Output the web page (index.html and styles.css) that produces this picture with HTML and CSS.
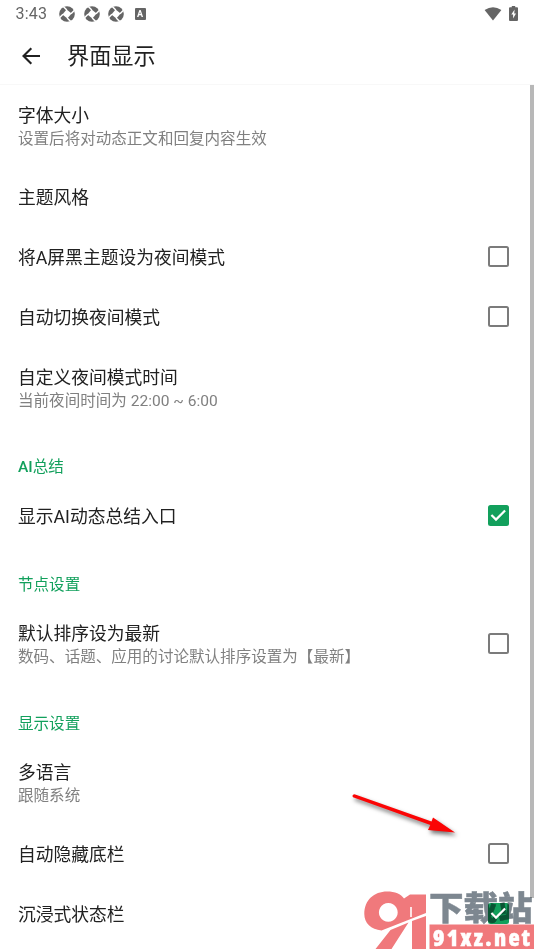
FILE: index.html
```html
<!DOCTYPE html>
<html lang="zh-CN">
<head>
<meta charset="utf-8">
<title>界面显示</title>
<link rel="stylesheet" href="styles.css">
</head>
<body>
<svg class="defs" width="0" height="0">
  <symbol id="sync" viewBox="0 0 16 16">
    <circle cx="8" cy="8" r="7.8" fill="#656565"/>
    <path d="M7.600 3.400 12.600 7.600 8.400 12.600 3.400 8.400Z" fill="#fff"/>
    <path d="M7.800 4 4.300.5M12 7.800l3.500-3.500M8.200 12l3.500 3.500M4 8.200.5 11.700" stroke="#fff" stroke-width="1.500"/>
  </symbol>
  <symbol id="tick" viewBox="0 0 21 21">
    <path d="M3.500 10.300 8.200 15 17.500 5.700" fill="none" stroke="#fff" stroke-width="2.300"/>
  </symbol>
</svg>
<div class="screen">
  <header class="top">
    <div class="status">
      <span class="clock">3:43</span>
      <svg class="sync"><use href="#sync"/></svg>
      <svg class="sync"><use href="#sync"/></svg>
      <svg class="sync"><use href="#sync"/></svg>
      <span class="badge">A</span>
      <svg class="wifi" width="18" height="14" viewBox="0 0 18 14"><path d="M.6 3Q9-2.5 17.4 3L9 13.5Z" fill="#656565"/></svg>
      <svg class="battery" width="9" height="15" viewBox="0 0 9 15"><path d="M2.8 0h3.4v1.3H8a1 1 0 0 1 1 1V14a1 1 0 0 1-1 1H1a1 1 0 0 1-1-1V2.300a1 1 0 0 1 1-1h1.800Z" fill="#656565"/><path d="M5.600 3.500 2.300 8.600h1.800v4L7 7.500H5.200Z" fill="#fff"/></svg>
    </div>
    <div class="bar">
      <svg class="back" width="18" height="18" viewBox="0 0 18 18"><path d="M18 9H1.600M9.300 1.200 1.500 9l7.800 7.800" fill="none" stroke="#212121" stroke-width="2.100"/></svg>
      <h1>界面显示</h1>
    </div>
  </header>
  <main>
    <div class="row tall"><div><p>字体大小</p><small>设置后将对动态正文和回复内容生效</small></div></div>
    <div class="row"><p>主题风格</p></div>
    <div class="row"><p>将A屏黑主题设为夜间模式</p><i class="box"></i></div>
    <div class="row"><p>自动切换夜间模式</p><i class="box"></i></div>
    <div class="row tall"><div><p>自定义夜间模式时间</p><small>当前夜间时间为 22:00 ~ 6:00</small></div></div>
    <h2><b>AI</b>总结</h2>
    <div class="row"><p>显示AI动态总结入口</p><i class="box on"><svg><use href="#tick"/></svg></i></div>
    <h2>节点设置</h2>
    <div class="row tall"><div><p>默认排序设为最新</p><small>数码、话题、应用的讨论默认排序设置为【最新】</small></div><i class="box"></i></div>
    <h2>显示设置</h2>
    <div class="row tall"><div><p>多语言</p><small>跟随系统</small></div></div>
    <div class="row"><p>自动隐藏底栏</p><i class="box"></i></div>
    <div class="row"><p>沉浸式状态栏</p><i class="box on"><svg><use href="#tick"/></svg></i></div>
  </main>
  <div class="scrollbar"></div>
  <svg class="arrow" width="120" height="60" viewBox="345 785 120 60">
    <path d="M354.500 794.200 431.500 821.400 433 817.600 455 832.400 428 830 430.300 825 353 797.300Q351.500 794.500 354.500 794.200Z" fill="#fb0505"/>
  </svg>
  <svg class="watermark" width="174" height="62" viewBox="360 888 174 62">
    <g fill="#f0797c">
      <path fill-rule="evenodd" d="M364.300 914C364.300 900 374 891.500 387 891.500C395 891.500 401 894 404 898.500L410 894.500H426V913L381.500 930.500C371 929.500 364.300 923 364.300 914ZM388.300 903a9.400 9.400 0 1 0 .01 0Z"/>
      <path d="M390.500 930 408.500 922.500 391.500 949H375.500ZM412 921 426 916V949H412Z"/>
      <rect x="429.500" y="924.500" width="104.500" height="24.500"/>
    </g>
    <path d="M411 907V917" stroke="#fff" stroke-width="1.600"/>
    <text class="name" x="429" y="919.800" textLength="103.500" lengthAdjust="spacingAndGlyphs">下载站</text>
    <text class="site" x="433" y="945.500" textLength="97" lengthAdjust="spacing">91xz.net</text>
  </svg>
</div>
</body>
</html>
```
FILE: styles.css
```css
* { box-sizing: border-box; }
body {
  margin: 0;
  background: #fff;
  color: #212121;
  font-family: Roboto, "Noto Sans CJK SC", sans-serif;
}
.defs { position: absolute; }
.screen { position: relative; height: 950px; overflow: hidden; }
.top { height: 85px; border-bottom: 1px solid #f8f8f8; }
.status { display: flex; align-items: center; height: 27px; padding: 0 16px 0 15.500px; }
.clock { width: 43.500px; font-size: 16px; letter-spacing: .2px; color: #656565; }
.sync { width: 16px; height: 16px; margin-right: 8.500px; }
.badge {
  width: 11px; height: 12px; margin-left: 2px;
  border-radius: 1px; background: #656565; color: #fff;
  font-size: 9px; font-weight: 700; line-height: 12px; text-align: center;
}
.wifi { margin-left: auto; margin-right: 7px; }
.bar { display: flex; align-items: center; height: 58px; padding-left: 22px; }
h1 { margin: 0 0 0 27px; font-size: 22.200px; font-weight: 400; line-height: 30px; }
main { padding-top: .5px; }
.row {
  display: flex; align-items: center; justify-content: space-between;
  height: 60px; padding: 0 25.500px 0 18px;
}
.tall { height: 81.500px; }
p { margin: 0; padding-top: 1.500px; font-size: 17.780px; line-height: 24px; }
.tall p { padding-top: 3px; }
small { display: block; font-size: 15.560px; line-height: 23px; color: #808080; }
h2 {
  display: flex; align-items: flex-end;
  height: 57.500px; margin: 0; padding: 0 18px 8px;
  font-size: 15.560px; font-weight: 400; line-height: 22px; color: #12a05c;
}
b { font-weight: 500; }
.box { width: 20.500px; height: 20.500px; margin-bottom: 1.500px; border: 2px solid #7b7b7b; border-radius: 2.500px; }
.on { border: 0; background: #12a05c; }
.on svg { display: block; position: relative; z-index: 1; width: 100%; height: 100%; }
.scrollbar { position: absolute; top: 84.500px; right: 0; width: 4.500px; height: 813px; background: #b8b8b8; }
.arrow { position: absolute; left: 345px; top: 785px; filter: drop-shadow(2px 3px 2px rgba(0, 0, 0, .55)); }
.watermark { position: absolute; left: 360px; top: 888px; mix-blend-mode: multiply; }
.name {
  font-family: "Noto Sans CJK SC", sans-serif; font-size: 33px; font-weight: 900;
  fill: #7d8790; stroke: #7d8790; stroke-width: .5px;
}
.site { font-family: "Open Sans", sans-serif; font-size: 23px; font-weight: 800; font-stretch: condensed; fill: #fff; stroke: #fff; stroke-width: .5px; }
```
